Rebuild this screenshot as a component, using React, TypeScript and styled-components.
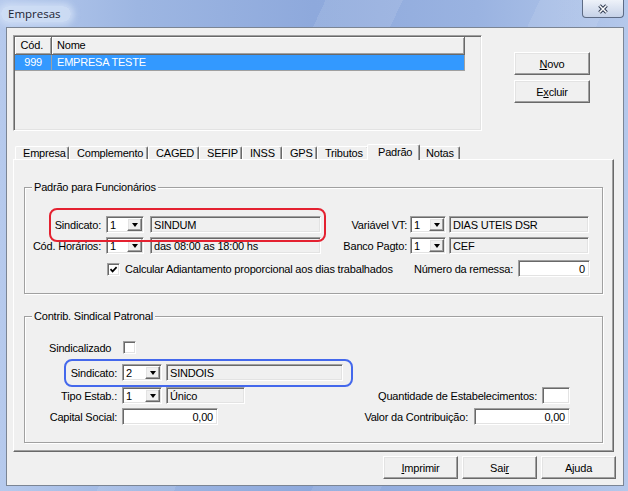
import { createGlobalStyle, css, styled } from "styled-components";

const GlobalStyle = createGlobalStyle`
  html, body { margin: 0; padding: 0; }
  body {
    width: 628px;
    height: 491px;
    overflow: hidden;
    background: #a6bde6;
    font-family: "Liberation Sans", Arial, sans-serif;
    font-size: 11px;
    letter-spacing: -0.2px;
    color: #000;
  }
  * { box-sizing: border-box; }
`;

const sunken = css`
  border: 1px solid;
  border-color: #a0a0a0 #fff #fff #a0a0a0;
  box-shadow: inset 1px 1px 0 #696969, inset -1px -1px 0 #e3e3e3;
`;

const raised = css`
  border: 1px solid;
  border-color: #fff #696969 #696969 #fff;
  box-shadow: inset -1px -1px 0 #a0a0a0, inset 1px 1px 0 #e3e3e3;
  background: #f0f0f0;
`;

const Window = styled.div`
  width: 628px;
  height: 491px;
  display: flex;
  flex-direction: column;
  background:
    linear-gradient(115deg, transparent 0 38%, rgba(255, 255, 255, 0.1) 38% 47%, transparent 47% 63%, rgba(255, 255, 255, 0.09) 63% 71%, transparent 71%),
    linear-gradient(90deg, #b6caed 0%, #9db6e2 22%, #8ea9dc 50%, #9ab3e1 76%, #b4c8eb 100%);
`;

const TitleBar = styled.div`
  height: 27px;
  display: flex;
  justify-content: space-between;
  align-items: flex-start;
`;

const Title = styled.span`
  margin: 6px 0 0 1px;
  padding: 0 10px 0 7px;
  line-height: 16px;
  font-family: "Open Sans", "Noto Sans", sans-serif;
  font-size: 11.5px;
  letter-spacing: 0;
  color: #1c2433;
  background: rgba(214, 227, 247, 0.75);
  border-radius: 10px;
  box-shadow: 0 0 6px 3px rgba(214, 227, 247, 0.75);
`;

const CloseButton = styled.div`
  width: 42px;
  height: 18px;
  margin-right: 4px;
  border: 1px solid #5d6b84;
  border-top: none;
  border-radius: 0 0 4px 4px;
  background: linear-gradient(#eef2f9, #c6d2e8);
  display: flex;
  align-items: center;
  justify-content: center;
`;

const Client = styled.div`
  flex: 1;
  margin: 0 4px 5px 6px;
  border: 1px solid #7b8594;
  background: #f0f0f0;
  display: flex;
  flex-direction: column;
`;

const Top = styled.div`
  height: 114px;
  display: flex;
`;

const ListBox = styled.div`
  ${sunken};
  width: 469px;
  height: 96px;
  margin: 7px 0 0 6px;
  padding: 1px;
  background: #f0f0f0;
`;

const GridHeader = styled.div`
  display: flex;
  height: 18px;
`;

const HeadCell = styled.div<{ $w: number; $right?: boolean }>`
  width: ${(p) => p.$w}px;
  height: 18px;
  line-height: 16px;
  border-right: 1px solid #696969;
  border-bottom: 1px solid #696969;
  box-shadow: inset 1px 1px 0 #fff, inset -1px -1px 0 #a0a0a0;
  text-align: ${(p) => (p.$right ? "right" : "left")};
  padding: ${(p) => (p.$right ? "0 8px 0 0" : "0 0 0 5px")};
`;

const GridRow = styled.div<{ $selected?: boolean }>`
  display: flex;
  height: 16px;
  color: ${(p) => (p.$selected ? "#fff" : "#000")};
`;

const Cell = styled.div<{ $w: number; $right?: boolean; $selected?: boolean }>`
  width: ${(p) => p.$w}px;
  height: 16px;
  line-height: 15px;
  background: ${(p) => (p.$selected ? "#3399ff" : "transparent")};
  border-right: 1px solid #a0a0a0;
  border-bottom: 1px solid #a0a0a0;
  text-align: ${(p) => (p.$right ? "right" : "left")};
  padding: ${(p) => (p.$right ? "0 9px 0 0" : "0 0 0 5px")};
  white-space: nowrap;
`;

const SideButtons = styled.div`
  margin-left: 32px;
  padding-top: 24px;
  display: flex;
  flex-direction: column;
  gap: 5px;
`;

const Button = styled.div<{ $w?: number }>`
  ${raised};
  width: ${(p) => p.$w ?? 76}px;
  height: 23px;
  display: flex;
  align-items: center;
  justify-content: center;
  white-space: nowrap;
`;

const TabArea = styled.div`
  width: 601px;
  margin: 1px 0 0 6px;
`;

const TabStrip = styled.div`
  height: 16px;
  padding-left: 2px;
  display: flex;
  align-items: flex-end;
`;

const Tab = styled.div<{ $w: number; $active?: boolean }>`
  position: relative;
  z-index: ${(p) => (p.$active ? 1 : 0)};
  flex-shrink: 0;
  width: ${(p) => (p.$active ? p.$w + 4 : p.$w)}px;
  height: ${(p) => (p.$active ? 16 : 13)}px;
  margin: ${(p) => (p.$active ? "0 -2px -1px" : "0")};
  padding: ${(p) => (p.$active ? "1px 0 0 10px" : "0 0 0 7px")};
  line-height: ${(p) => (p.$active ? 13 : 12)}px;
  border-top: 1px solid #fff;
  border-left: 1px solid #fff;
  border-right: 1px solid #696969;
  border-radius: 2px 2px 0 0;
  box-shadow: inset -1px 0 0 #a0a0a0;
  background: #f0f0f0;
  white-space: nowrap;
`;

const TabPanel = styled.div`
  height: 293px;
  border: 1px solid;
  border-color: #fff #696969 #696969 #fff;
  box-shadow: inset -1px -1px 0 #a0a0a0;
  padding: 27px 0 0 10px;
`;

const GroupBox = styled.div<{ $h: number; $mt?: number }>`
  position: relative;
  width: 579px;
  height: ${(p) => p.$h}px;
  margin-top: ${(p) => p.$mt ?? 0}px;
  border: 1px solid #a0a0a0;
  box-shadow: inset 1px 1px 0 #fff, 1px 1px 0 #fff;
  display: flex;
  flex-direction: column;
`;

const Legend = styled.span`
  position: absolute;
  top: -7px;
  left: 7px;
  padding: 0 2px;
  line-height: 13px;
  background: #f0f0f0;
`;

const Row = styled.div<{ $mt: number; $pr?: number }>`
  display: flex;
  align-items: center;
  height: 17px;
  margin-top: ${(p) => p.$mt}px;
  padding-right: ${(p) => p.$pr ?? 0}px;
  flex-shrink: 0;
`;

const Label = styled.span<{ $w?: number; $ml?: number; $left?: boolean }>`
  flex-shrink: 0;
  ${(p) => (p.$w ? `width: ${p.$w}px;` : "")}
  margin-left: ${(p) => p.$ml ?? 0}px;
  text-align: ${(p) => (p.$left ? "left" : "right")};
  white-space: nowrap;
`;

const Spacer = styled.div`
  flex: 1;
`;

const Edit = styled.div<{ $w: number; $ml?: number; $ro?: boolean; $num?: boolean }>`
  ${sunken};
  flex-shrink: 0;
  width: ${(p) => p.$w}px;
  height: 17px;
  margin-left: ${(p) => p.$ml ?? 0}px;
  padding: 0 4px 0 3px;
  background: ${(p) => (p.$ro ? "#f0f0f0" : "#fff")};
  display: flex;
  align-items: center;
  justify-content: ${(p) => (p.$num ? "flex-end" : "flex-start")};
  white-space: nowrap;
  overflow: hidden;
`;

const Combo = styled.div<{ $w: number; $ml?: number }>`
  ${sunken};
  flex-shrink: 0;
  width: ${(p) => p.$w}px;
  height: 17px;
  margin-left: ${(p) => p.$ml ?? 0}px;
  padding: 0 1px 0 3px;
  background: #fff;
  display: flex;
  align-items: center;
`;

const DropButton = styled.div`
  ${raised};
  margin-left: auto;
  width: 15px;
  height: 13px;
  display: flex;
  align-items: center;
  justify-content: center;

  &::after {
    content: "";
    border-left: 3.5px solid transparent;
    border-right: 3.5px solid transparent;
    border-top: 4px solid #000;
  }
`;

const CheckBox = styled.div<{ $ml?: number; $mt?: number }>`
  ${sunken};
  flex-shrink: 0;
  width: 13px;
  height: 13px;
  margin-left: ${(p) => p.$ml ?? 0}px;
  margin-top: ${(p) => p.$mt ?? 0}px;
  background: #fff;
  display: flex;
  align-items: center;
  justify-content: center;
`;

const Marked = styled.div<{ $color: string; $l: number; $r: number; $t: number; $b: number }>`
  position: relative;
  display: flex;
  align-items: center;

  &::after {
    content: "";
    position: absolute;
    left: ${(p) => p.$l}px;
    right: ${(p) => p.$r}px;
    top: ${(p) => p.$t}px;
    bottom: ${(p) => p.$b}px;
    border: 2px solid ${(p) => p.$color};
    border-radius: 8px;
    pointer-events: none;
  }
`;

const BottomBar = styled.div`
  display: flex;
  justify-content: flex-end;
  gap: 4px;
  padding: 4px 7px 0 0;
`;

const tabs = [
  { label: "Empresa", w: 54 },
  { label: "Complemento", w: 79 },
  { label: "CAGED", w: 51 },
  { label: "SEFIP", w: 43 },
  { label: "INSS", w: 40 },
  { label: "GPS", w: 35 },
  { label: "Tributos", w: 52 },
  { label: "Padrão", w: 49, active: true },
  { label: "Notas", w: 42 },
];

function Drop({ w, ml, value }: { w: number; ml: number; value: string }) {
  return (
    <Combo $w={w} $ml={ml}>
      {value}
      <DropButton />
    </Combo>
  );
}

function Check({ checked, ml, mt }: { checked?: boolean; ml?: number; mt?: number }) {
  return (
    <CheckBox $ml={ml} $mt={mt}>
      {checked ? (
        <svg width="9" height="9" viewBox="0 0 9 9">
          <path d="M1.5 4.2 L3.6 6.4 L7.6 2.2" fill="none" stroke="#000" strokeWidth="1.7" />
        </svg>
      ) : null}
    </CheckBox>
  );
}

export default function App() {
  return (
    <>
      <GlobalStyle />
      <Window>
        <TitleBar>
          <Title>Empresas</Title>
          <CloseButton>
            <svg width="12" height="10" viewBox="0 0 12 10">
              <path d="M2.5 1.5 L9.5 8.5 M9.5 1.5 L2.5 8.5" stroke="#2f3b52" strokeWidth="3.6" />
              <path d="M2.5 1.5 L9.5 8.5 M9.5 1.5 L2.5 8.5" stroke="#fff" strokeWidth="1.5" />
            </svg>
          </CloseButton>
        </TitleBar>
        <Client>
          <Top>
            <ListBox>
              <GridHeader>
                <HeadCell $w={37} $right>
                  Cód.
                </HeadCell>
                <HeadCell $w={413}>Nome</HeadCell>
              </GridHeader>
              <GridRow $selected>
                <Cell $w={37} $right $selected>
                  999
                </Cell>
                <Cell $w={413} $selected>
                  EMPRESA TESTE
                </Cell>
              </GridRow>
            </ListBox>
            <SideButtons>
              <Button>
                <u>N</u>ovo
              </Button>
              <Button>
                E<u>x</u>cluir
              </Button>
            </SideButtons>
          </Top>

          <TabArea>
            <TabStrip>
              {tabs.map((t) => (
                <Tab key={t.label} $w={t.w} $active={t.active}>
                  {t.label}
                </Tab>
              ))}
            </TabStrip>
            <TabPanel>
              <GroupBox $h={107}>
                <Legend>Padrão para Funcionários</Legend>
                <Row $mt={28}>
                  <Marked $color="#e42130" $l={24} $r={-5} $t={-8} $b={-9}>
                    <Label $w={76}>Sindicato:</Label>
                    <Drop w={38} ml={5} value="1" />
                    <Edit $w={171} $ml={6} $ro>
                      SINDUM
                    </Edit>
                  </Marked>
                  <Label $w={86}>Variável VT:</Label>
                  <Drop w={36} ml={3} value="1" />
                  <Edit $w={140} $ml={3} $ro>
                    DIAS UTEIS DSR
                  </Edit>
                </Row>
                <Row $mt={4}>
                  <Label $w={76}>Cód. Horários:</Label>
                  <Drop w={38} ml={5} value="1" />
                  <Edit $w={171} $ml={6} $ro>
                    das 08:00 as 18:00 hs
                  </Edit>
                  <Label $w={86}>Banco Pagto:</Label>
                  <Drop w={36} ml={3} value="1" />
                  <Edit $w={140} $ml={3} $ro>
                    CEF
                  </Edit>
                </Row>
                <Row $mt={6} $pr={12}>
                  <Check checked ml={82} mt={2} />
                  <Label $ml={5} $left>
                    Calcular Adiantamento proporcional aos dias trabalhados
                  </Label>
                  <Spacer />
                  <Label>Número da remessa:</Label>
                  <Edit $w={72} $ml={5} $num>
                    0
                  </Edit>
                </Row>
              </GroupBox>

              <GroupBox $h={127} $mt={22}>
                <Legend>Contrib. Sindical Patronal</Legend>
                <Row $mt={22}>
                  <Label $w={74} $ml={24} $left>
                    Sindicalizado
                  </Label>
                  <Check />
                </Row>
                <Row $mt={8}>
                  <Marked $color="#4468ec" $l={39} $r={-10} $t={-5} $b={-6}>
                    <Label $w={92}>Sindicato:</Label>
                    <Drop w={40} ml={5} value="2" />
                    <Edit $w={177} $ml={4} $ro>
                      SINDOIS
                    </Edit>
                  </Marked>
                </Row>
                <Row $mt={6} $pr={32}>
                  <Label $w={92}>Tipo Estab.:</Label>
                  <Drop w={40} ml={5} value="1" />
                  <Edit $w={79} $ml={4} $ro>
                    Único
                  </Edit>
                  <Spacer />
                  <Label>Quantidade de Estabelecimentos:</Label>
                  <Edit $w={28} $ml={5} />
                </Row>
                <Row $mt={4} $pr={32}>
                  <Label $w={92}>Capital Social:</Label>
                  <Edit $w={96} $ml={5} $num>
                    0,00
                  </Edit>
                  <Spacer />
                  <Label>Valor da Contribuição:</Label>
                  <Edit $w={96} $ml={6} $num>
                    0,00
                  </Edit>
                </Row>
              </GroupBox>
            </TabPanel>
          </TabArea>

          <BottomBar>
            <Button $w={75}>
              <u>I</u>mprimir
            </Button>
            <Button $w={75}>
              Sai<u>r</u>
            </Button>
            <Button $w={75}>Ajuda</Button>
          </BottomBar>
        </Client>
      </Window>
    </>
  );
}
